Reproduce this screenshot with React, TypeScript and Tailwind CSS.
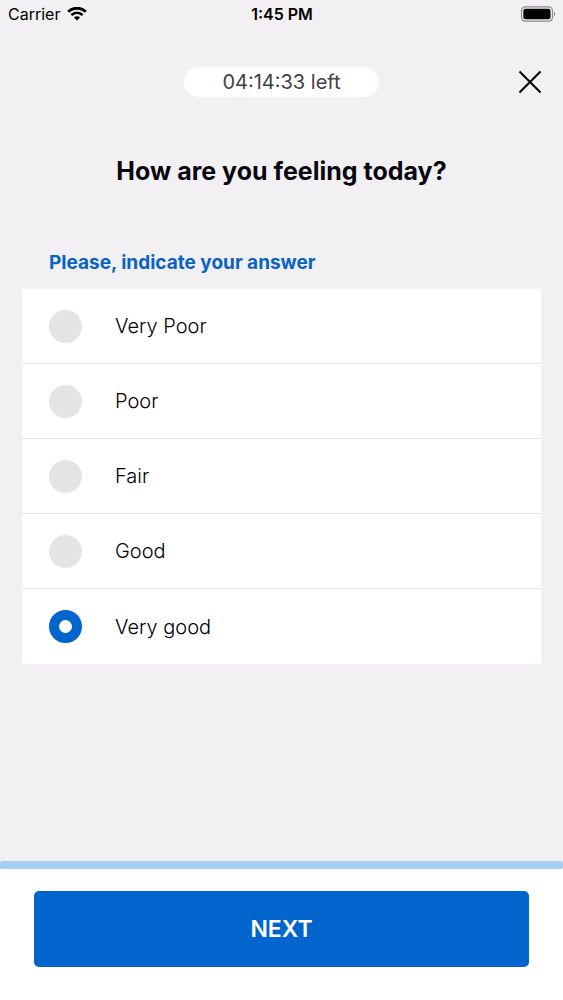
import { useState } from "react";

const answers = ["Very Poor", "Poor", "Fair", "Good", "Very good"];

function WifiIcon() {
  return (
    <svg viewBox="0 0 20 14" className="h-[14px] w-5" fill="none" aria-hidden="true">
      <path d="M1.2 4.8a12.6 12.6 0 0 1 17.6 0" stroke="#000" strokeWidth="2.9" />
      <path d="M4.4 8.1a8 8 0 0 1 11.2 0" stroke="#000" strokeWidth="2.6" />
      <path d="M10 13.6 6.9 10.6a4.4 4.4 0 0 1 6.2 0Z" fill="#000" />
    </svg>
  );
}

function BatteryIcon() {
  return (
    <svg viewBox="0 0 36 16" className="h-4 w-9" fill="none" aria-hidden="true">
      <rect x="1.5" y="0.8" width="31" height="14.4" rx="4" stroke="#8b8a8d" strokeWidth="1.2" />
      <rect x="3.3" y="2.8" width="27.2" height="10.4" rx="2.2" fill="#000" />
      <path d="M34 5.8c1.6.5 1.6 3.9 0 4.4Z" fill="#8b8a8d" />
    </svg>
  );
}

function StatusBar() {
  return (
    <div className="grid h-7 grid-cols-3 items-center pr-[7px] pl-2 text-base text-black">
      <div className="flex items-center gap-[7px]">
        <span>Carrier</span>
        <WifiIcon />
      </div>
      <span className="text-center font-semibold">1:45 PM</span>
      <div className="flex justify-end">
        <BatteryIcon />
      </div>
    </div>
  );
}

export default function App() {
  const [selected, setSelected] = useState("Very good");

  return (
    <div className="flex min-h-screen flex-col bg-[#f2f0f3] font-['Inter','Liberation_Sans',sans-serif]">
      <StatusBar />

      <header className="mt-9 grid grid-cols-[1fr_auto_1fr] items-center px-[15px]">
        <div className="col-start-2 flex h-[30px] w-[195px] items-center justify-center rounded-full bg-white text-xl text-[#414143]">
          04:14:33 left
        </div>
        <button type="button" aria-label="Close" className="flex h-9 w-9 cursor-pointer items-center justify-center justify-self-end">
          <svg viewBox="0 0 24 24" className="h-6 w-6" fill="none" aria-hidden="true">
            <path d="M1.5 1.5 22.5 22.5M22.5 1.5 1.5 22.5" stroke="#000" strokeWidth="2" />
          </svg>
        </button>
      </header>

      <main className="flex-1 px-[22px] pb-6">
        <h1 className="mt-[55px] text-center text-[25px] leading-8 font-bold text-[#0a080f]">
          How are you feeling today?
        </h1>

        <fieldset className="mt-[62px]">
          <legend className="px-[27px] text-[19px] leading-7 font-bold text-[#0864c0]">
            Please, indicate your answer
          </legend>
          <div className="mt-3 divide-y divide-[#e6e4e8] bg-white">
            {answers.map((answer) => (
              <label key={answer} className="flex h-[75px] cursor-pointer items-center gap-[33px] px-[27px]">
                <input
                  type="radio"
                  name="feeling"
                  value={answer}
                  checked={selected === answer}
                  onChange={() => setSelected(answer)}
                  className="h-[33px] w-[33px] shrink-0 appearance-none rounded-full bg-[#e5e3e6] checked:border-[10px] checked:border-[#0165cd] checked:bg-white"
                />
                <span className="text-xl font-light text-black">{answer}</span>
              </label>
            ))}
          </div>
        </fieldset>
      </main>

      <footer className="bg-white">
        <div className="h-2 rounded-xs bg-[#a5cdf5]" />
        <div className="px-[34px] pt-[22px] pb-[33px]">
          <button
            type="button"
            className="h-[76px] w-full cursor-pointer rounded-[5px] bg-[#0165cd] text-[23px] font-semibold text-white"
          >
            NEXT
          </button>
        </div>
      </footer>
    </div>
  );
}
